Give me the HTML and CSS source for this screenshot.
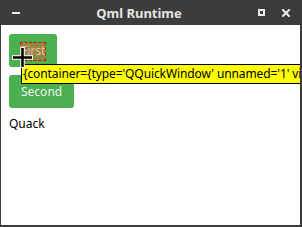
FILE: index.html
```html
<!DOCTYPE html>
<html lang="en">
<head>
    <meta charset="UTF-8">
    <title>Qml Runtime</title>
    <link rel="stylesheet" href="styles.css">
</head>
<body>

<div class="window">
    <!-- Title bar -->
    <div class="titlebar">
        <svg class="icon-min" width="8" height="2" viewBox="0 0 8 2">
            <rect x="0" y="0" width="8" height="2" fill="#ececec"/>
        </svg>
        <span class="title">Qml Runtime</span>
        <div class="controls">
            <svg width="7" height="7" viewBox="0 0 7 7">
                <rect x="1" y="1" width="5" height="5" fill="none" stroke="#ececec" stroke-width="2"/>
            </svg>
            <svg width="8" height="8" viewBox="0 0 8 8">
                <path d="M1 1 L7 7 M7 1 L1 7" stroke="#ececec" stroke-width="2" stroke-linecap="square"/>
            </svg>
        </div>
    </div>

    <div class="content">
        <button class="btn"><span class="picked">First</span></button>
        <button class="btn">Second</button>
        <div class="label">Quack</div>

        <!-- Inspector tooltip -->
        <div class="tooltip">{container={type='QQuickWindow' unnamed='1' visible='true'}}</div>

        <!-- Crosshair cursor -->
        <svg class="cursor" width="21" height="21" viewBox="0 0 21 21">
            <path d="M10.5 0 V21 M0 10.5 H21" stroke="#ffffff" stroke-width="4.5"/>
            <path d="M10.5 1 V20 M1 10.5 H20" stroke="#000000" stroke-width="2.5"/>
        </svg>
    </div>
</div>

</body>
</html>
```

FILE: styles.css
```css
body {
    margin: 0;
    font-family: 'Noto Sans', sans-serif;
    background-color: #ffffff;
}

.window {
    width: 302px;
    height: 227px;
    display: flex;
    flex-direction: column;
}

.titlebar {
    height: 25px;
    background-color: #3c3c3c;
    display: flex;
    align-items: center;
    padding: 0 12px;
    flex-shrink: 0;
}

.icon-min {
    display: block;
    margin-top: 1px;
}

.title {
    flex: 1;
    text-align: center;
    color: #e4e4e4;
    font-size: 13px;
    font-weight: 700;
}

.controls {
    display: flex;
    align-items: center;
    gap: 17px;
}

.controls svg {
    display: block;
}

.content {
    flex: 1;
    position: relative;
    overflow: hidden;
    background-color: #ffffff;
    border-left: 1px solid #3c3c3c;
    border-right: 2px solid #3c3c3c;
    border-bottom: 2px solid #3c3c3c;
    padding: 9px 0 0 8px;
    display: flex;
    flex-direction: column;
    align-items: flex-start;
}

.btn {
    height: 33px;
    padding: 0 12px;
    margin: 0 0 8px 0;
    border: none;
    border-radius: 3px;
    background-color: #4caf50;
    color: #f2f2f2;
    font-family: 'Noto Sans', sans-serif;
    font-size: 12px;
}

/* Item picked by the inspector */
.picked {
    display: inline-block;
    color: #f0b8a8;
    background-color: rgba(230, 90, 50, 0.45);
    outline: 1px dashed #ff0000;
    padding: 0 0 1px 0;
    line-height: 16px;
}

.label {
    margin-top: -1px;
    font-size: 12px;
    color: #000000;
}

.tooltip {
    position: absolute;
    left: 20px;
    top: 39px;
    height: 18px;
    line-height: 18px;
    padding: 0 1px;
    white-space: nowrap;
    background-color: #ffff00;
    border: 1px solid #000000;
    color: #000000;
    font-size: 12px;
    letter-spacing: -0.1px;
}

.cursor {
    position: absolute;
    left: 11px;
    top: 22px;
}
```
